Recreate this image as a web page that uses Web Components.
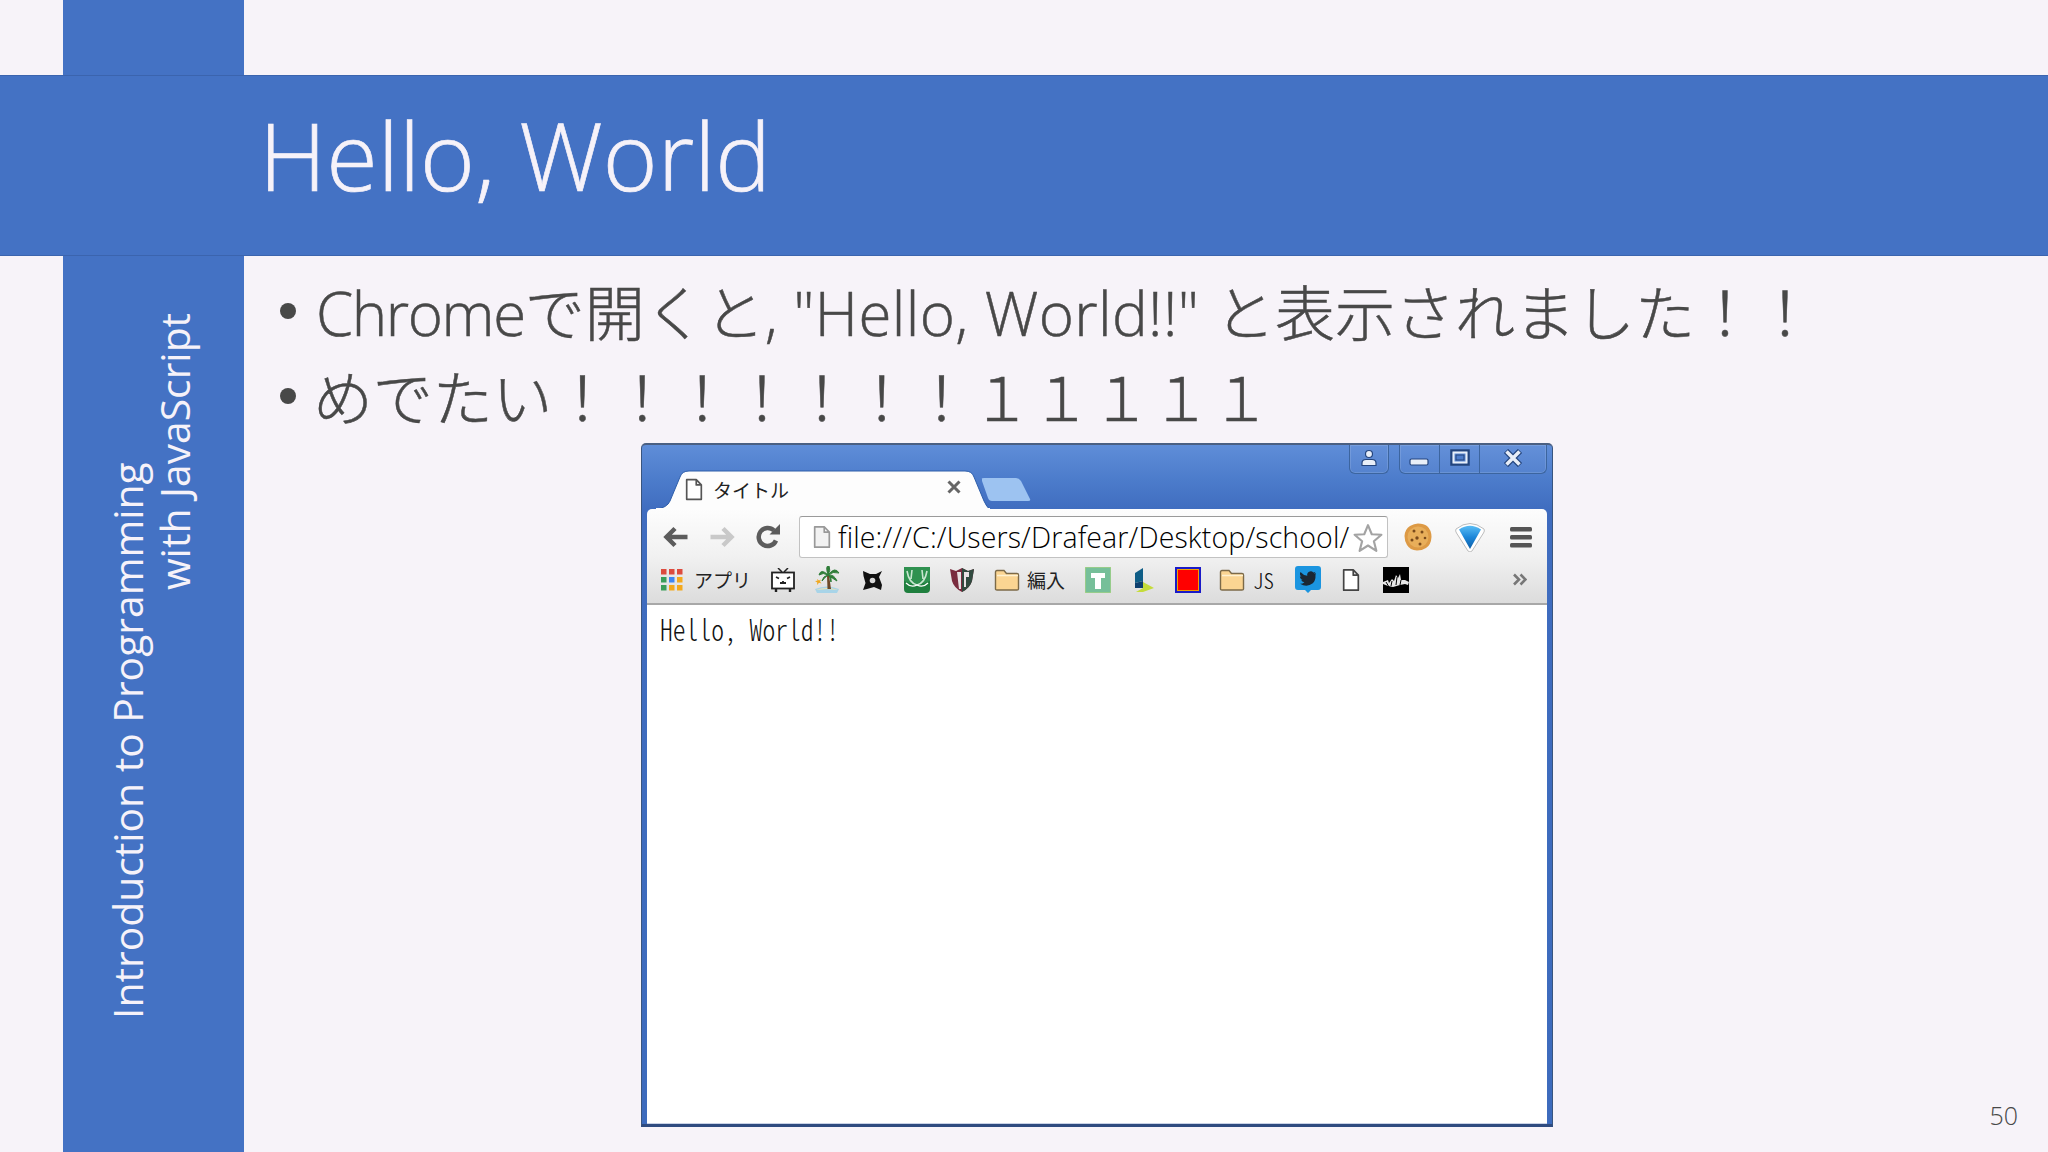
<!DOCTYPE html>
<html lang="ja"><head><meta charset="utf-8">
<style>
html,body{margin:0;padding:0;width:2048px;height:1152px;overflow:hidden;background:#f7f3f9}
</style></head>
<body>
<slide-deck>
  <side-bar slot="side"><span>Introduction to Programming</span><span>with JavaScript</span></side-bar>
  <title-band slot="band">Hello, World</title-band>
  <slide-body slot="body">
    <bullet-line><span style="letter-spacing:-1.4px">Chrome</span>で開くと, <span style="letter-spacing:.42px">"Hello, World!!"</span> と表示されました！！</bullet-line>
    <bullet-line><span style="letter-spacing:-.14px;margin-left:-3px">めでたい！！！！！！！１１１１１</span></bullet-line>
    <browser-window></browser-window>
  </slide-body>
  <page-number slot="num">50</page-number>
</slide-deck>
<script>
function el(name, css, html){
  const t=document.createElement('template');
  t.innerHTML='<style>'+css+'</style>'+html;
  customElements.define(name,class extends HTMLElement{
    constructor(){super();this.attachShadow({mode:'open'}).appendChild(t.content.cloneNode(true));}
  });
}
const SANS='"Open Sans","Noto Sans CJK JP",sans-serif';
el('slide-deck',`
:host{display:grid;width:2048px;height:1152px;grid-template-columns:63px 181px 1fr;grid-template-rows:75px 181px 1fr;background:#f7f3f9;font-family:${SANS}}
::slotted([slot=side]){grid-column:2;grid-row:1/4}
::slotted([slot=band]){grid-column:1/4;grid-row:2;z-index:1}
::slotted([slot=body]){grid-column:3;grid-row:3}
::slotted([slot=num]){grid-column:3;grid-row:3;align-self:end;justify-self:end;z-index:2}
`,`<slot name="side"></slot><slot name="band"></slot><slot name="body"></slot><slot name="num"></slot>`);
el('side-bar',`
:host{display:flex;flex-direction:column;writing-mode:vertical-rl;transform:rotate(180deg);background:#4472c4;color:#f6f2f9;font-size:40.8px;font-weight:400;line-height:47px;padding-right:41px;box-sizing:border-box;align-items:flex-start;white-space:nowrap}
::slotted(span:first-child){display:block;margin-top:133px}
::slotted(span:last-child){display:block;margin-top:562px}
`,`<slot></slot>`);
el('title-band',`
:host{display:flex;align-items:center;background:#4472c4;color:#f6f2f9;font-size:93.6px;font-weight:300;-webkit-text-stroke:.7px #f6f2f9;padding:0 0 22px 259px;border-top:1px solid #3b64ae;border-bottom:1px solid #3b64ae;box-sizing:border-box;line-height:1}
`,`<slot></slot>`);
el('slide-body',`
:host{display:flex;flex-direction:column;padding:0 0 0 39px;color:#484848;min-width:0}
`,`<slot></slot>`);
el('bullet-line',`
:host{display:flex;align-items:center;height:85px;font-size:60px;font-weight:300;-webkit-text-stroke:.5px #484848;white-space:nowrap;position:relative;top:11px}
i{width:16px;height:16px;border-radius:50%;background:#484848;margin:2px 20px 0 -3px;flex:none}
`,`<i></i><span><slot></slot></span>`);
el('page-number',`
:host{display:block;font-size:25px;color:#484848;padding:0 30px 20px 0;line-height:34px;font-weight:300}
`,`<slot></slot>`);

const page=(w,h,s='#555',f='#fff')=>`<svg width="${w}" height="${h}" viewBox="0 0 16 20" preserveAspectRatio="none"><path d="M1.5 1.5H10L14.5 6V18.5H1.5Z M10 1.5V6H14.5" fill="${f}" stroke="${s}" stroke-width="1.5" stroke-linejoin="round"/></svg>`;
const folder=`<svg width="26" height="22" viewBox="0 0 26 22"><path d="M1.5 20V3q0-1.5 1.5-1.5h7l2.5 3H23q1.5 0 1.5 1.5V20q0 1-1.5 1H3q-1.500 0-1.500-1Z" fill="#fbd592" stroke="#7c6a48" stroke-width="1.400"/><path d="M3 6.500H24" stroke="#fff1d0" stroke-width="1.500"/></svg>`;
el('browser-window',`
:host{display:flex;flex-direction:column;width:912px;height:684px;margin-left:358px;margin-top:17px;box-sizing:border-box;background:linear-gradient(#5f8dd8 0,#4c7ccb 35px,#3f6cbf 66px,#3d6bbd 100%);border:1px solid #39557f;border-top:2px solid #4a5f82;border-bottom:3px solid #2f4b80;border-radius:5px 5px 0 0;padding:0 5px;overflow:hidden;font-family:${SANS}}
.top{height:64px;flex:none;display:flex;justify-content:flex-end;align-items:flex-start;gap:10px;position:relative}
.cap{display:flex;height:28px;border:1px solid #3c659f;border-top:0;border-radius:0 0 6px 6px;background:rgba(255,255,255,.03);box-shadow:inset 0 0 0 1px rgba(255,255,255,.12)}
.cap>div{display:flex;align-items:center;justify-content:center;width:38px;padding-bottom:2px;box-sizing:border-box;border-right:1px solid #3c659f}
.cap.win>div{width:40px}
.cap>div:last-child{border-right:0}
.cap.win>div:last-child{width:66px}
.tabs{position:absolute;left:9px;top:25px;display:flex;align-items:flex-end}
.tab{position:relative;width:334px;height:39px;display:flex;align-items:center;font-size:19px;color:#222;padding-left:29px;box-sizing:border-box;gap:10px;z-index:1}
.tab>svg.sh{position:absolute;left:0;top:0;z-index:-1}
.tab .x{position:absolute;right:28px;top:9px}
.newt{margin:0 0 8px -10px}
.toolbar{flex:none;height:96px;background:linear-gradient(#fdfdfd 0,#f1f1f1 50%,#dcdcdc 100%);border-bottom:2px solid #a8a8a8;border-radius:5px 5px 0 0;box-sizing:border-box;display:flex;flex-direction:column}
.nav{height:56px;display:flex;align-items:center;padding-left:6px;flex:none}
.nav .b{width:46px;display:flex;justify-content:center;flex:none}
.omni{flex:none;margin-left:8px;width:589px;height:42px;box-sizing:border-box;background:#fff;border:1px solid #c2c2c2;border-top-color:#9a9a9a;border-radius:3px;display:flex;align-items:center;font-size:28.500px;color:#000;padding-left:13px;gap:7px;position:relative;white-space:nowrap;font-weight:300;letter-spacing:.13px}
.omni .star{position:absolute;right:4px;top:6px}
.ext{width:52px;display:flex;justify-content:center;flex:none}
.bm{height:30px;display:flex;align-items:center;padding-left:13px;font-size:19px;color:#222;position:relative;flex:none}
.it{display:flex;align-items:center;justify-content:center;height:26px;flex:none}
.more{position:absolute;right:20px;top:8px}
.page{flex:1;background:#fff;min-height:0;padding:6px 0 0 13px;font-family:"Noto Sans CJK JP",sans-serif;font-size:25.6px;font-feature-settings:"hwid";font-weight:300;color:#111;line-height:36px;border-bottom:1px solid #c9d2e6}
.page span{display:inline-block;transform:scaleY(1.15);transform-origin:50% 60%}
`,`
<div class="top">
  <div class="tabs">
    <div class="tab">
      <svg class="sh" width="334" height="39" viewBox="0 0 334 39"><path d="M0 39Q11 38 14 31L24 7Q26 1 33 1H309Q316 1 318 7L328 31Q331 38 334 39Z" fill="#fdfdfd" stroke="#2f5faa" stroke-width="1"/><path d="M0 39H334" stroke="#fdfdfd" stroke-width="2"/></svg>
      ${page(18,23)}<span>タイトル</span>
      <svg class="x" width="16" height="16" viewBox="0 0 16 16"><path d="M2.500 2.500L13.500 13.500M13.500 2.500L2.500 13.500" stroke="#666" stroke-width="3"/></svg>
    </div>
    <svg class="newt" width="52" height="24" viewBox="0 0 52 24"><path d="M2 2Q1 1 4 1H36Q39 1 41 4L50 22Q51 24 48 24H12Q9 24 8 21L2 4Z" fill="#9dc3f1"/></svg>
  </div>
  <div class="cap"><div><svg width="18" height="18" viewBox="0 0 18 18"><circle cx="9" cy="5" r="3.500" fill="#e8eef8" stroke="#24457e" stroke-width="1.200"/><path d="M2 16.500V14Q2 10.500 6 10.500H12Q16 10.500 16 14V16.500Z" fill="#e8eef8" stroke="#24457e" stroke-width="1.200"/></svg></div></div>
  <div class="cap win">
    <div><svg width="22" height="10" viewBox="0 0 22 10" style="margin-top:8px"><rect x="1" y="2" width="18" height="6" rx="1.500" fill="#e8eef8" stroke="#24457e" stroke-width="1.200"/></svg></div>
    <div><svg width="20" height="18" viewBox="0 0 20 18"><rect x="1.500" y="1.500" width="17" height="14" fill="none" stroke="#24457e" stroke-width="2.500"/><rect x="3.500" y="3.500" width="13" height="10" fill="none" stroke="#e8eef8" stroke-width="2"/><rect x="6" y="6" width="8" height="5" fill="#4d7cca" stroke="#24457e"/></svg></div>
    <div><svg width="20" height="18" viewBox="0 0 20 18"><path d="M3 2L17 16M17 2L3 16" stroke="#24457e" stroke-width="6"/><path d="M3.500 2.500L16.500 15.500M16.500 2.500L3.500 15.500" stroke="#e8eef8" stroke-width="3.500"/></svg></div>
  </div>
</div>
<div class="toolbar">
  <div class="nav">
    <div class="b"><svg width="26" height="22" viewBox="0 0 26 22"><path d="M12 2.500L3.500 11L12 19.500M4 11H24.500" fill="none" stroke="#5c5c5c" stroke-width="4.500"/></svg></div>
    <div class="b"><svg width="26" height="22" viewBox="0 0 26 22"><path d="M14 2.500L22.500 11L14 19.500M22 11H1.500" fill="none" stroke="#c9c9c9" stroke-width="4.500"/></svg></div>
    <div class="b"><svg width="26" height="26" viewBox="0 0 26 26"><path d="M21 16.500A9 9 0 1 1 19 6.500" fill="none" stroke="#5c5c5c" stroke-width="4.500"/><path d="M14.500 10.500H25V0Z" fill="#5c5c5c"/></svg></div>
    <div class="omni">${page(18,24,'#999','#f2f2f2')}<span>file:///C:/Users/Drafear/Desktop/school/</span>
      <svg class="star" width="30" height="30" viewBox="0 0 28 28"><path d="M14 2L17.500 10.500L26.500 11L19.500 17L21.800 26L14 21L6.200 26L8.500 17L1.500 11L10.500 10.500Z" fill="#fff" stroke="#a3a3a3" stroke-width="2" stroke-linejoin="round"/></svg></div>
    <div class="ext" style="margin-left:4px"><svg width="28" height="28" viewBox="0 0 28 28"><path d="M14 .5Q20 .5 23 3Q27.500 7 27.500 14Q27 22 22 25Q18 27.500 13 27.500Q6 27 3 22Q.5 18 .5 13Q1 6 6 3Q10 .5 14 .5Z" fill="#dd9a45"/><circle cx="14" cy="14" r="10.500" fill="#e8ae5a"/><g fill="#7a4a1c"><circle cx="10" cy="8" r="1.500"/><circle cx="18" cy="9" r="1.500"/><circle cx="13" cy="15" r="1.700"/><circle cx="21" cy="15" r="1.300"/><circle cx="8" cy="17" r="1.500"/><circle cx="16" cy="21" r="1.500"/></g></svg></div>
    <div class="ext"><svg width="30" height="30" viewBox="0 0 30 30"><defs><linearGradient id="gem" x1="0" y1="0" x2="0" y2="1"><stop offset="0" stop-color="#59bdf5"/><stop offset=".5" stop-color="#1c86d8"/><stop offset="1" stop-color="#0f5fa8"/></linearGradient></defs><path d="M1 7Q15 -4 29 7Q30 9 28.500 11L17 29Q15 31 13 29L1.500 11Q0 9 1 7Z" fill="#fff" stroke="#bdbdbd"/><path d="M4 7.500Q15 0 26 7.500L15 27Z" fill="url(#gem)"/></svg></div>
    <div class="ext" style="margin-left:-1px"><svg width="22" height="22" viewBox="0 0 22 22"><g fill="#555"><rect y="1" width="22" height="4.500" rx="1.500"/><rect y="9" width="22" height="4.500" rx="1.500"/><rect y="17" width="22" height="4.500" rx="1.500"/></g></svg></div>
  </div>
  <div class="bm">
    <div class="it" style="width:24px;margin-right:10px"><svg width="22" height="22" viewBox="0 0 22 22"><g><rect width="5.500" height="5.500" fill="#dd4b3e"/><rect x="8" width="5.500" height="5.500" fill="#dd4b3e"/><rect x="16" width="5.500" height="5.500" fill="#dd4b3e"/><rect y="8" width="5.500" height="5.500" fill="#3a9d58"/><rect x="8" y="8" width="5.500" height="5.500" fill="#3f86f3"/><rect x="16" y="8" width="5.500" height="5.500" fill="#f4a91d"/><rect y="16" width="5.500" height="5.500" fill="#3a9d58"/><rect x="8" y="16" width="5.500" height="5.500" fill="#f4a91d"/><rect x="16" y="16" width="5.500" height="5.500" fill="#f4a91d"/></g></svg></div>
    <span style="width:62px;flex:none">アプリ</span>
    <div class="it" style="width:46px;margin-left:4px"><svg width="24" height="24" viewBox="0 0 24 24"><path d="M7 0L11 4M17 0L13 4" stroke="#222" stroke-width="1.500"/><rect x="1" y="4.500" width="22" height="16" fill="#fff" stroke="#222" stroke-width="1.800"/><path d="M5 9l3 1.500M19 9l-3 1.500M9 15h6M12 13v2" stroke="#222" stroke-width="1.800"/><path d="M5 20v4M19 20v4" stroke="#222" stroke-width="2.400"/></svg></div>
    <div class="it" style="width:46px;margin-left:-2px"><svg width="26" height="28" viewBox="0 0 26 28"><path d="M1 23Q13 18 25 23L23 27H3Z" fill="#a8d4e8"/><path d="M2 24Q13 20 24 24L13 23Z" fill="#f2e6b0"/><path d="M13 9L13.500 23H17L15 9Z" fill="#6e4a28"/><path d="M14 9Q7 2 5 9Q9 6 14 9ZM14 9Q21 0 25 7Q19 5 14 9ZM14 9Q11 -1 15 0Q17 4 14 9ZM14 9Q20 8 23 15Q18 12 14 9ZM14 9Q9 10 8 15Q11 11 14 9ZM15 9Q16 12 17 16Q18 12 15 9Z" fill="#2f7d38" stroke="#2f7d38" stroke-width="1"/><path d="M3 13l2 1.500 2-1-1 2 1.500 2-2.500-.8L3 19l.3-2.500L1 15l2.500-.3Z" fill="#f0a820"/></svg></div>
    <div class="it" style="width:44px"><svg width="21" height="21" viewBox="0 0 21 21"><path d="M1 1L8 4L14 4L20 1L17 7L20 15L19 20L12 17L5 19L1 20L3.500 13L1.500 6Z" fill="#111"/><circle cx="10.500" cy="10.500" r="2.800" fill="#d8d8d8"/></svg></div>
    <div class="it" style="width:47px;margin-left:-1px"><svg width="26" height="26" viewBox="0 0 26 26"><rect width="26" height="26" rx="4" fill="#1f7f3e"/><path d="M0 0H26V14Q20 17 13 17Q6 17 0 14Z" fill="#2f9150"/><path d="M3 4Q5 16 13 18Q21 16 23 4M8 3L7 12M18 3L19 12" fill="none" stroke="#c8e6d0" stroke-width="1.600"/><path d="M2 16Q7 21 13 18Q19 21 24 16" fill="none" stroke="#fff" stroke-width="1.200"/></svg></div>
    <div class="it" style="width:45px;margin-left:-1px"><svg width="26" height="26" viewBox="0 0 26 26"><path d="M1 2L7 4L13 1L19 4L25 2L23 14Q21 21 13 25Q5 21 3 14Z" fill="#7a2c3f"/><path d="M13 1L19 4L25 2L23 14Q21 21 13 25Z" fill="#314a3f"/><path d="M8 5H12V22H10ZM15 5H20V10H17V20H15Z" fill="#e8e2e4"/></svg></div>
    <div class="it" style="width:34px;justify-content:flex-end;margin-left:2px">${folder}</div>
    <span style="margin-left:7px;width:50px;flex:none">編入</span>
    <div class="it" style="width:30px;margin-left:6px"><svg width="26" height="26" viewBox="0 0 26 26"><rect width="26" height="26" fill="#76bf99"/><rect x="0" y="0" width="26" height="26" fill="none" stroke="#b6d87c" stroke-width="1"/><path d="M6 6H20V11H16V22H10V11H6Z" fill="#fff"/></svg></div>
    <div class="it" style="width:45px;margin-left:7px"><svg width="24" height="26" viewBox="0 0 24 26"><path d="M4 6L12 1V14L4 16Z" fill="#0e5d86"/><path d="M4 16L12 14V21H4Z" fill="#0d3f6e"/><path d="M12 15L23 21L12 25H5L12 21Z" fill="#c5dc3a"/></svg></div>
    <div class="it" style="width:44px;margin-left:1px"><svg width="26" height="26" viewBox="0 0 26 26"><rect width="26" height="26" fill="#1a1ac8"/><rect x="2" y="2" width="22" height="22" fill="#f0a000"/><rect x="3" y="3" width="20" height="20" fill="#ff0000"/></svg></div>
    <div class="it" style="width:34px;margin-left:1px;justify-content:flex-end">${folder}</div>
    <span style="margin-left:8px;width:38px;flex:none;font-family:'Noto Sans CJK JP',sans-serif;font-feature-settings:'hwid';font-weight:300;font-size:21px;color:#111">JS</span>
    <div class="it" style="width:30px;margin-left:2px"><svg width="26" height="28" viewBox="0 0 26 28"><path d="M3 0H23Q26 0 26 3V21Q26 24 23 24H16L13 27L10 24H3Q0 24 0 21V3Q0 0 3 0Z" fill="#1b95e0"/><path d="M21 7q-1 .5-2 .6 1-.7 1.500-1.800-1 .6-2.200.8a3.500 3.500 0 0 0-6 3.200Q8.500 9.500 5.500 6q-1.500 2.800 1 4.700-.9 0-1.600-.4 0 2.700 2.800 3.400-.8.2-1.600.1.800 2.300 3.300 2.500Q7.500 18 5 17.800q7 4 12.800-.5 3-3 2.700-8Q20.500 8.300 21 7Z" fill="#1b2733"/></svg></div>
    <div class="it" style="width:38px;margin-left:16px;justify-content:flex-start;padding-left:3px">${page(18,24,'#444')}</div>
    <div class="it" style="width:26px;margin-left:3px"><svg width="26" height="26" viewBox="0 0 26 26"><rect width="26" height="26" fill="#000"/><path d="M0 15L5 13L6 16L9 12L11 14L13 8L15 11L17 7L18 13L22 13L26 15L25 18L22 17L17 18L10 20L5 19L0 17Z" fill="#e8e8e8"/><path d="M3 15L6 20M9 14L8 19M14 10L13 18M18 13L17 18" stroke="#000" stroke-width="1"/></svg></div>
    <svg class="more" width="14" height="13" viewBox="0 0 14 13"><path d="M1 1.500L6 6.500L1 11.500M7.500 1.500L12.500 6.500L7.500 11.500" fill="none" stroke="#777" stroke-width="2.600"/></svg>
  </div>
</div>
<div class="page"><span>Hello, World!!</span></div>
`);
</script>
</body></html>
